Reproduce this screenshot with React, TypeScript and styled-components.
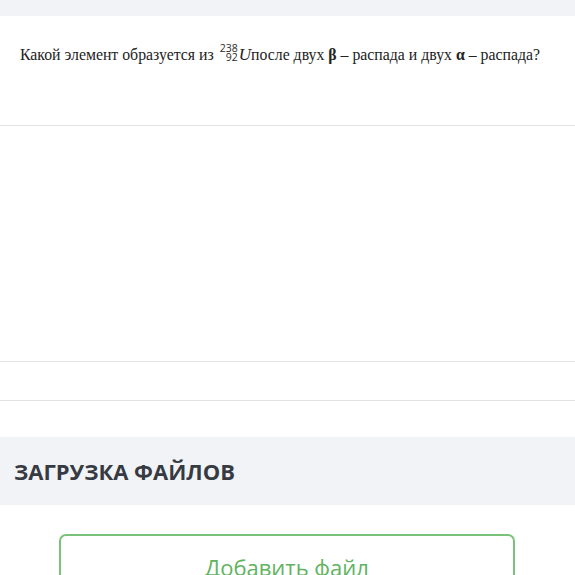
import styled, { createGlobalStyle } from "styled-components";

const GlobalStyle = createGlobalStyle`
  body {
    margin: 0;
    background: #ffffff;
    font-family: "Open Sans", "Liberation Sans", sans-serif;
    overflow: hidden;
  }
`;

const Page = styled.div`
  width: 575px;
  height: 575px;
  overflow: hidden;
  background: #ffffff;
`;

const TopBand = styled.div`
  height: 16px;
  background: #f2f3f6;
`;

const Question = styled.div`
  height: 109px;
  padding: 0 20px;
  border-bottom: 1px solid #e2e2e2;
  display: flex;
  align-items: flex-start;
`;

const QuestionText = styled.p`
  margin: 0;
  padding-top: 28px;
  font-family: "Liberation Serif", "Times New Roman", serif;
  font-size: 15.8px;
  line-height: 20px;
  color: #222;
  white-space: nowrap;
`;

const Indices = styled.span`
  display: inline-flex;
  flex-direction: column;
  align-items: flex-end;
  vertical-align: 8px;
  margin: 0 1px 0 6px;
  font-family: "Open Sans", "Liberation Sans", sans-serif;
  font-size: 10.5px;
  line-height: 9px;
  color: #2a2a2a;
`;

const Symbol = styled.i`
  font-family: "Liberation Serif", serif;
  font-size: 17px;
`;

const Answer = styled.div`
  height: 235px;
  border-bottom: 1px solid #e2e2e2;
`;

const Spacer = styled.div`
  height: 38px;
  border-bottom: 1px solid #e2e2e2;
`;

const SectionHeader = styled.div`
  margin-top: 36px;
  height: 68px;
  background: #f2f3f6;
  display: flex;
  align-items: center;
  padding: 0 14px;
`;

const SectionTitle = styled.h2`
  margin: 0;
  font-size: 22px;
  font-weight: 700;
  color: #363a42;
`;

const Upload = styled.div`
  padding: 29px 60px 0 59px;
`;

const AddButton = styled.button`
  width: 456px;
  height: 60px;
  border: 2px solid #7ac27a;
  border-radius: 7px;
  background: #ffffff;
  color: #5fb45f;
  font-family: "Open Sans", "Liberation Sans", sans-serif;
  font-size: 22px;
  padding: 16px 0 0;
  display: flex;
  justify-content: center;
  align-items: flex-start;
`;

export default function App() {
  return (
    <Page>
      <GlobalStyle />
      <TopBand />
      <Question>
        <QuestionText>
          Какой элемент образуется из
          <Indices>
            <span>238</span>
            <span>92</span>
          </Indices>
          <Symbol>U</Symbol>
          после двух <b>β</b> – распада и двух <b>α</b> – распада?
        </QuestionText>
      </Question>
      <Answer />
      <Spacer />
      <SectionHeader>
        <SectionTitle>ЗАГРУЗКА ФАЙЛОВ</SectionTitle>
      </SectionHeader>
      <Upload>
        <AddButton>Добавить файл</AddButton>
      </Upload>
    </Page>
  );
}
